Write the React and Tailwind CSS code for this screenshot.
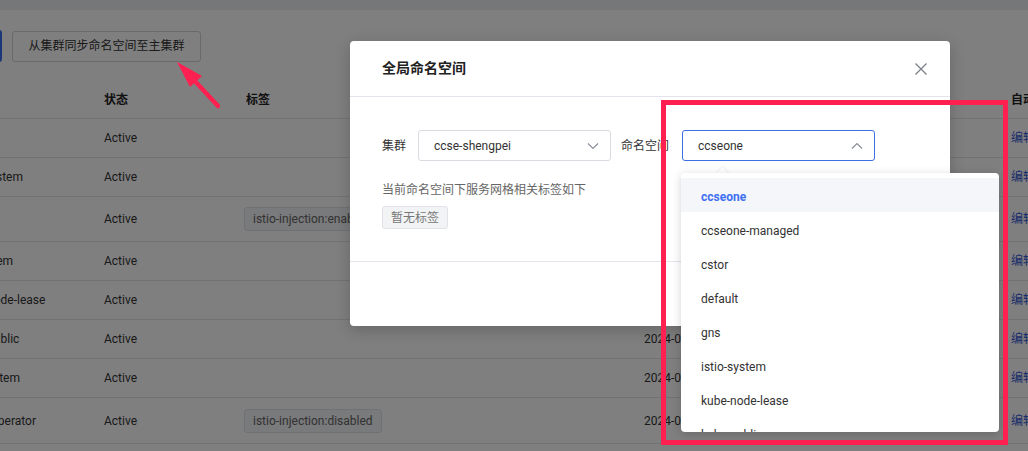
import React from "react";

const rows = [
  { name: "default", tag: null, h: "h-[39px]" },
  { name: "istio-system", tag: null, h: "h-[39px]" },
  { name: "gns", tag: "istio-injection:enabled", h: "h-[45px]" },
  { name: "ns-system", tag: null, h: "h-[39px]" },
  { name: "kube-node-lease", tag: null, h: "h-[39px]" },
  { name: "kube-public", tag: null, h: "h-[39px]" },
  { name: "ops-system", tag: null, h: "h-[39px]" },
  { name: "mesh-operator", tag: "istio-injection:disabled", h: "h-[46px]" },
];

const options = [
  "ccseone",
  "ccseone-managed",
  "cstor",
  "default",
  "gns",
  "istio-system",
  "kube-node-lease",
  "kube-public",
  "kube-system",
];

function Chevron({ up }) {
  return (
    <svg width="14" height="14" viewBox="0 0 14 14" fill="none">
      {up ? (
        <path d="M2 9.5 L7 4.5 L12 9.5" stroke="#8a8f99" strokeWidth="1.2" />
      ) : (
        <path d="M2 4.5 L7 9.5 L12 4.5" stroke="#8a8f99" strokeWidth="1.2" />
      )}
    </svg>
  );
}

export default function App() {
  return (
    <div className="relative w-[1028px] h-[451px] overflow-hidden bg-white font-['Roboto','Noto_Sans_CJK_SC',sans-serif] text-[12px] text-[#333]">
      {/* underlying page */}
      <div className="h-[10px] bg-[#eceef1]" />
      <div className="flex items-center gap-[10px] pt-[20px]">
        <div className="w-[80px] ml-[-78px] h-[32px] rounded-[3px] bg-[#3b6cf0]" />
        <div className="h-[31px] w-[189px] flex items-center justify-center border border-[#d4d4d8] rounded-[3px] text-[12px] text-[#333]">
          从集群同步命名空间至主集群
        </div>
      </div>
      <div className="mt-[19px] ml-[-58px] w-[1200px]">
        <div className="grid grid-cols-[146px_142px_398px_367px_120px] h-[38px] items-center border-b border-[#e4e4e8] font-bold text-[#222]">
          <div className="pl-[16px]">名称</div>
          <div className="pl-[16px]">状态</div>
          <div className="pl-[16px]">标签</div>
          <div className="pl-[16px]">创建时间</div>
          <div className="pl-[16px]">自动注入</div>
        </div>
        {rows.map((r, i) => (
          <div
            key={i}
            className={`grid grid-cols-[146px_142px_398px_367px_120px] items-center border-b border-[#e4e4e8] ${r.h}`}
          >
            <div className="pl-[16px] whitespace-nowrap">{r.name}</div>
            <div className="pl-[16px]">Active</div>
            <div className="pl-[14px]">
              {r.tag && (
                <span className="inline-flex items-center h-[24px] px-[8px] rounded-[3px] border border-[#e2e3e8] bg-[#f3f4f6] text-[#666] text-[12px]">
                  {r.tag}
                </span>
              )}
            </div>
            <div className="pl-[16px] whitespace-nowrap">2024-01-15 10:23:45</div>
            <div className="pl-[16px] text-[#3559d6]">编辑</div>
          </div>
        ))}
      </div>

      {/* overlay */}
      <div className="absolute inset-0 bg-black/50" />

      {/* modal */}
      <div className="absolute left-[350px] top-[41px] w-[600px] h-[285px] bg-white rounded-[4px] shadow-[0_4px_16px_rgba(0,0,0,0.2)] flex flex-col">
        <div className="h-[56px] flex items-center justify-between px-[32px] border-b border-[#e3e4ee]">
          <span className="text-[14px] font-bold text-[#222]">全局命名空间</span>
          <svg width="14" height="14" viewBox="0 0 14 14" className="mr-[-10px]">
            <path d="M1.5 1.5 L12.5 12.5 M12.5 1.5 L1.5 12.5" stroke="#7b7f88" strokeWidth="1.3" />
          </svg>
        </div>
        <div className="px-[32px] pt-[33px] pb-[32px] border-b border-[#e3e4ee]">
          <div className="flex items-center">
            <span className="text-[12px] text-[#333] w-[24px]">集群</span>
            <div className="ml-[12px] w-[193px] h-[31px] border border-[#d9dbe1] rounded-[3px] flex items-center justify-between pl-[15px] pr-[10px]">
              <span className="text-[12px] text-[#333]">ccse-shengpei</span>
              <Chevron />
            </div>
            <span className="ml-[10px] text-[12px] text-[#333]">命名空间</span>
            <div className="ml-[13px] w-[193px] h-[31px] border border-[#3d6fe6] rounded-[3px] flex items-center justify-between pl-[15px] pr-[10px]">
              <span className="text-[12px] text-[#333]">ccseone</span>
              <Chevron up />
            </div>
          </div>
          <div className="mt-[20px] text-[12px] text-[#666] leading-[18px]">当前命名空间下服务网格相关标签如下</div>
          <div className="mt-[7px] inline-flex items-center h-[23px] px-[8px] rounded-[3px] border border-[#e2e3e8] bg-[#f2f3f5] text-[12px] text-[#777]">
            暂无标签
          </div>
        </div>
        <div className="flex-1" />
      </div>

      {/* dropdown */}
      <div className="absolute left-[718px] top-[169px] w-[9px] h-[9px] bg-white rotate-45 shadow-[-1px_-1px_2px_rgba(0,0,0,0.06)]" />
      <div className="absolute left-[681px] top-[173px] w-[318px] h-[259px] bg-white rounded-[4px] shadow-[0_2px_10px_rgba(0,0,0,0.18)] overflow-hidden pt-[5px]">
        {options.map((o, i) => (
          <div
            key={o}
            className={`h-[34px] flex items-center px-[20px] pt-[4px] text-[12px] ${
              i === 0 ? "bg-[#f5f6f9] text-[#3e6ff2] font-bold" : "text-[#333]"
            }`}
          >
            {o}
          </div>
        ))}
      </div>

      {/* annotations */}
      <div className="absolute left-[661px] top-[100px] w-[347px] h-[345px] border-[5px] border-[#ff2052]" />
      <svg className="absolute left-0 top-0 pointer-events-none" width="1028" height="451" viewBox="0 0 1028 451">
        <line x1="218" y1="106" x2="193" y2="79" stroke="#ff2052" strokeWidth="4.5" strokeLinecap="round" />
        <polygon points="177,62 202,76 190,87" fill="#ff2052" />
      </svg>
    </div>
  );
}
